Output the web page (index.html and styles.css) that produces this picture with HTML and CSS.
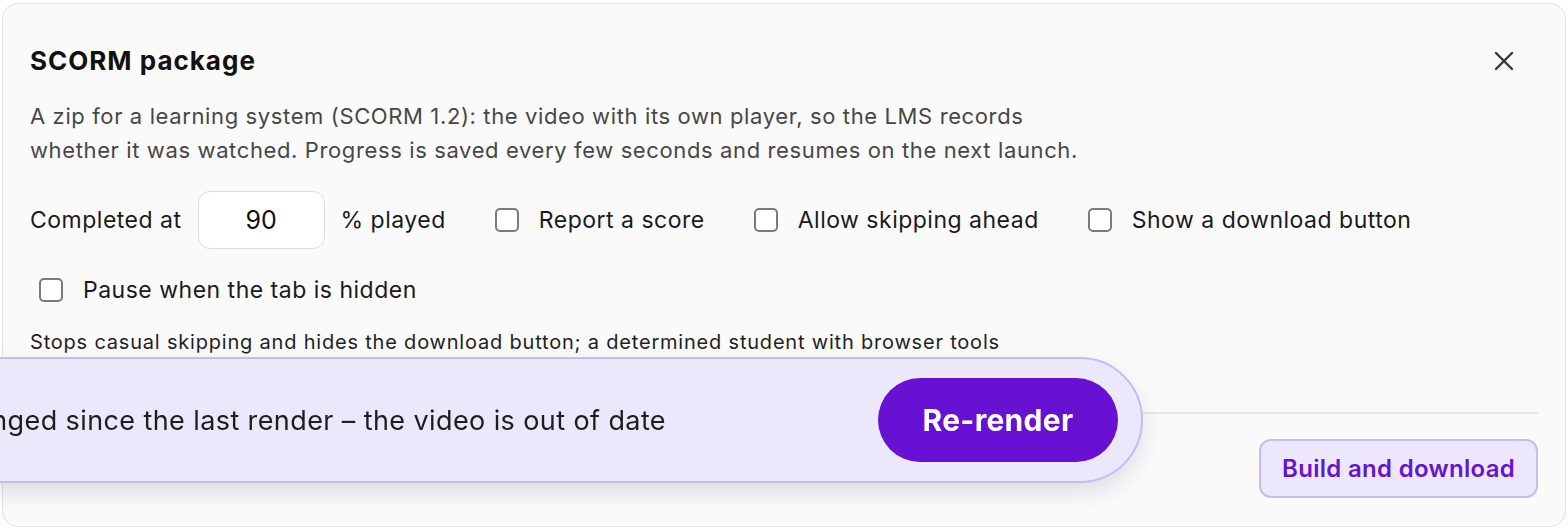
FILE: index.html
```html
<!DOCTYPE html>
<html lang="en">
<head>
<meta charset="utf-8">
<title>SCORM package</title>
<link rel="stylesheet" href="styles.css">
</head>
<body>
<div class="page">
  <section class="card">
    <header class="card-head">
      <h2 class="title">SCORM package</h2>
      <button class="close" aria-label="Close">
        <svg width="20" height="20" viewBox="0 0 20 20"><path d="M2 2 L18 18 M18 2 L2 18" stroke="#333" stroke-width="2.3" stroke-linecap="round" fill="none"/></svg>
      </button>
    </header>
    <p class="desc">A zip for a learning system (SCORM 1.2): the video with its own player, so the LMS records<br>whether it was watched. Progress is saved every few seconds and resumes on the next launch.</p>
    <div class="options">
      <div class="completed">
        <span>Completed at</span>
        <input class="num" type="text" value="90">
        <span class="unit">% played</span>
      </div>
      <label class="check"><span class="box"></span><span>Report a score</span></label>
      <label class="check"><span class="box"></span><span>Allow skipping ahead</span></label>
      <label class="check"><span class="box"></span><span>Show a download button</span></label>
      <label class="check"><span class="box"></span><span>Pause when the tab is hidden</span></label>
    </div>
    <p class="note">Stops casual skipping and hides the download button; a determined student with browser tools<br>can still find the video file inside the package.</p>
    <div class="divider"></div>
    <footer class="card-foot">
      <button class="build">Build and download</button>
    </footer>
  </section>
</div>
<div class="toast">
  <span class="toast-text">Settings have changed since the last render – the video is out of date</span>
  <button class="rerender">Re-render</button>
</div>
</body>
</html>
```
FILE: styles.css
```css
* { box-sizing: border-box; }
html, body { margin: 0; padding: 0; }
body {
  background: #ffffff;
  font-family: Inter, "Noto Sans", sans-serif;
  color: #1a1a1a;
  width: 1568px;
  height: 530px;
  overflow: hidden;
}
.page { padding: 3px 2px 0 2px; }
.card {
  border: 1px solid #e2e2e2;
  border-radius: 16px;
  background: #fafafa;
  padding: 40px 27px 28px 27px;
}
.card-head {
  display: flex;
  align-items: center;
  justify-content: space-between;
  height: 34px;
}
.title {
  margin: 0;
  font-size: 26px;
  font-weight: 700;
  letter-spacing: 1px;
  color: #111;
  line-height: 34px;
}
.close {
  width: 40px;
  height: 40px;
  border: 0;
  background: transparent;
  display: flex;
  align-items: center;
  justify-content: center;
  margin-right: 14px;
  padding: 0;
}
.desc {
  margin: 21px 0 0 0;
  font-size: 22px;
  letter-spacing: 0.62px;
  line-height: 34px;
  color: #474747;
}
.options {
  margin-top: 24px;
  display: flex;
  flex-wrap: wrap;
  align-items: center;
  column-gap: 40px;
  row-gap: 26px;
  font-size: 23px;
  letter-spacing: 0.5px;
  color: #1a1a1a;
}
.completed {
  display: flex;
  align-items: center;
  gap: 16px;
}
.num {
  width: 127px;
  height: 58px;
  border: 1.5px solid #dcdcdc;
  border-radius: 12px;
  background: #fff;
  text-align: center;
  font-family: inherit;
  font-size: 25px;
  color: #111;
  padding: 0;
}
.check {
  display: flex;
  align-items: center;
  gap: 20px;
  padding-left: 9px;
  height: 30px;
}
.box {
  width: 24px;
  height: 24px;
  border: 2px solid #7a7a7a;
  border-radius: 5px;
  background: #fff;
  flex: none;
}
.note {
  margin: 24px 0 0 0;
  font-size: 20px;
  letter-spacing: 0.8px;
  line-height: 26px;
  color: #1f1f1f;
}
.divider {
  margin-top: 31px;
  height: 2px;
  background: #e6e6e6;
}
.card-foot {
  display: flex;
  justify-content: flex-end;
  margin-top: 25px;
}
.build {
  height: 59px;
  padding: 0 21px;
  border: 2px solid #c9baf5;
  border-radius: 12px;
  background: #ede7fd;
  color: #6514cf;
  font-family: inherit;
  font-size: 24px;
  letter-spacing: 0.3px;
  font-weight: 600;
}
.toast {
  position: fixed;
  top: 357px;
  right: 425px;
  height: 126px;
  display: flex;
  align-items: center;
  gap: 212px;
  padding: 0 23px 0 40px;
  border: 2px solid #c6baf3;
  border-radius: 63px;
  background: #ece8fc;
  box-shadow: 0 10px 22px rgba(40, 20, 90, 0.12);
  white-space: nowrap;
}
.toast-text {
  font-size: 27px;
  letter-spacing: 0.4px;
  color: #1e1e1e;
}
.rerender {
  width: 240px;
  height: 84px;
  border: 0;
  border-radius: 42px;
  background: #6711d3;
  color: #fff;
  font-family: inherit;
  font-size: 30px;
  letter-spacing: 0.3px;
  font-weight: 700;
}
```
